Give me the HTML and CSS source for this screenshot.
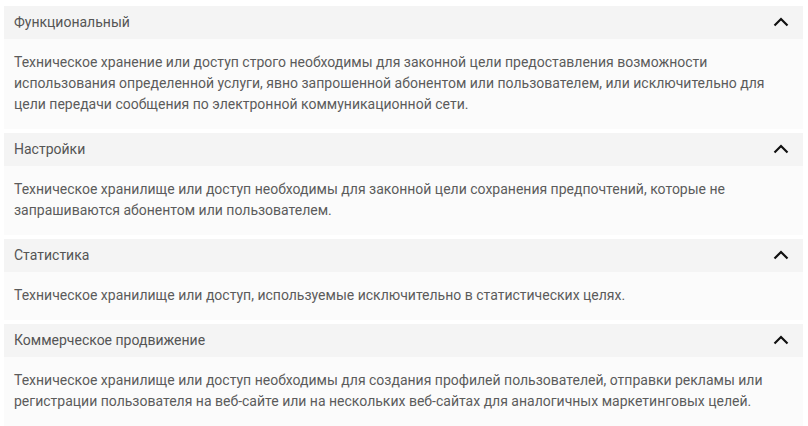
FILE: index.html
```html
<!DOCTYPE html>
<html lang="ru">
<head>
<meta charset="utf-8">
<link rel="stylesheet" href="styles.css">
</head>
<body>
<div class="list">
  <section class="item">
    <div class="head"><span class="title">Функциональный</span><svg class="chev" viewBox="0 0 16 10" width="16" height="10"><path d="M1.5 8.5 L8 2 L14.5 8.5" fill="none" stroke="#111" stroke-width="2.2"/></svg></div>
    <div class="body">Техническое хранение или доступ строго необходимы для законной цели предоставления возможности использования определенной услуги, явно запрошенной абонентом или пользователем, или исключительно для цели передачи сообщения по электронной коммуникационной сети.</div>
  </section>
  <section class="item">
    <div class="head"><span class="title">Настройки</span><svg class="chev" viewBox="0 0 16 10" width="16" height="10"><path d="M1.5 8.5 L8 2 L14.5 8.5" fill="none" stroke="#111" stroke-width="2.2"/></svg></div>
    <div class="body">Техническое хранилище или доступ необходимы для законной цели сохранения предпочтений, которые не запрашиваются абонентом или пользователем.</div>
  </section>
  <section class="item">
    <div class="head"><span class="title">Статистика</span><svg class="chev" viewBox="0 0 16 10" width="16" height="10"><path d="M1.5 8.5 L8 2 L14.5 8.5" fill="none" stroke="#111" stroke-width="2.2"/></svg></div>
    <div class="body">Техническое хранилище или доступ, используемые исключительно в статистических целях.</div>
  </section>
  <section class="item">
    <div class="head"><span class="title">Коммерческое продвижение</span><svg class="chev" viewBox="0 0 16 10" width="16" height="10"><path d="M1.5 8.5 L8 2 L14.5 8.5" fill="none" stroke="#111" stroke-width="2.2"/></svg></div>
    <div class="body">Техническое хранилище или доступ необходимы для создания профилей пользователей, отправки рекламы или регистрации пользователя на веб-сайте или на нескольких веб-сайтах для аналогичных маркетинговых целей.</div>
  </section>
</div>
</body>
</html>
```
FILE: styles.css
```css
html, body {
  margin: 0;
  padding: 0;
  background: #ffffff;
}
body {
  font-family: Roboto, "Liberation Sans", sans-serif;
  font-size: 14px;
  color: #5b5b5b;
}
.list {
  display: flex;
  flex-direction: column;
  gap: 4px;
  padding: 6px 5px 0 4px;
}
.head {
  display: flex;
  align-items: center;
  justify-content: space-between;
  box-sizing: border-box;
  height: 33px;
  padding: 0 14px 2px 10px;
  background: #f4f4f4;
  color: #555;
}
.chev {
  display: block;
}
.body {
  background: #fbfbfb;
  padding: 13px 30px 14px 10px;
  line-height: 21px;
}
```
